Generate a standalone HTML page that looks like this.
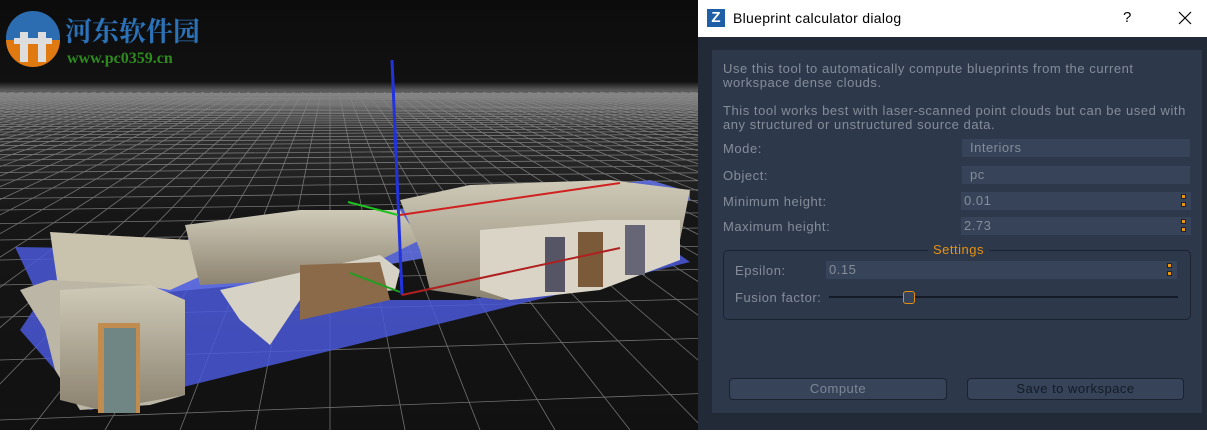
<!DOCTYPE html>
<html><head><meta charset="utf-8"><style>
*{margin:0;padding:0;box-sizing:border-box}
body{width:1207px;height:430px;overflow:hidden;background:#fff;font-family:"Liberation Sans","DejaVu Sans",sans-serif;position:relative}
.v{position:absolute;left:0;top:0;width:698px;height:430px;background:#111}
.dlg{position:absolute;left:698px;top:0;width:509px;height:430px;background:#222a38}
.tb{position:absolute;left:0;top:0;width:509px;height:37px;background:#fff}
.ab{position:absolute;font-size:13px;color:#858d99;white-space:nowrap;letter-spacing:0.55px}
.f{position:absolute;background:#364358;height:18px;font-size:13px;color:#858d99;line-height:18px;padding-left:8px;letter-spacing:0.5px}
.sp{position:absolute;right:5px;width:5px;height:5px;background:#e8950f;border:1px solid #222}
.btn{position:absolute;height:22px;border:1px solid #1b2230;border-radius:4px;background:#364358;font-size:13px;text-align:center;line-height:20px;letter-spacing:0.5px}
</style></head><body>
<div class="v">
<svg width="698" height="430" viewBox="0 0 698 430">
<defs>
<linearGradient id="sky" x1="0" y1="0" x2="0" y2="1">
<stop offset="0" stop-color="#0c0c0c"/><stop offset="0.19" stop-color="#111"/><stop offset="0.21" stop-color="#5a5a5a"/><stop offset="0.3" stop-color="#303030"/><stop offset="0.5" stop-color="#161616"/><stop offset="1" stop-color="#111"/>
</linearGradient>
<linearGradient id="wall" x1="0" y1="0" x2="0" y2="1"><stop offset="0" stop-color="#cfcab8"/><stop offset="1" stop-color="#8c8370"/></linearGradient>
</defs>
<rect width="698" height="430" fill="url(#sky)"/>
<g id="grid" stroke="#9a9a9a" stroke-width="0.8" fill="none" opacity="0.7"></g>
<polygon points="15,247 40,300 20,330 90,410 690,262 680,255 470,300 300,300 190,250" fill="#4a58d8" opacity="0.85"/>
<polygon points="190,233 650,180 690,192 690,200 470,250 300,280 80,300 70,290 180,262" fill="#5f6ee0" opacity="0.9"/>
<polygon points="50,232 190,240 215,258 210,272 170,290 140,285 120,295 60,300" fill="#c9c2ad"/>
<polygon points="185,225 300,210 400,210 420,240 380,260 300,280 200,285" fill="url(#wall)"/>
<polygon points="220,290 380,255 400,270 395,290 300,300 270,345 240,320" fill="#d6d2c6"/>
<polygon points="300,265 380,262 390,300 300,320" fill="#8a6a48"/>
<polygon points="400,200 470,185 610,180 690,190 680,240 640,260 560,290 500,300 430,290 420,250" fill="url(#wall)"/>
<polygon points="480,230 600,220 680,220 680,260 600,290 510,300 480,290" fill="#d9d4c6"/>
<rect x="545" y="237" width="20" height="55" fill="#556"/>
<rect x="578" y="232" width="25" height="55" fill="#7a5a38"/>
<rect x="625" y="225" width="20" height="50" fill="#667"/>
<polygon points="20,290 50,280 150,285 185,300 185,395 150,405 80,410 55,370 45,330" fill="#bcb6a6"/>
<polygon points="60,290 150,285 185,300 185,395 100,410 60,400" fill="url(#wall)"/>
<rect x="98" y="323" width="42" height="90" fill="#c08c4f"/>
<rect x="104" y="328" width="32" height="85" fill="#6f8684"/>
<line x1="392" y1="60" x2="402" y2="295" stroke="#2233dd" stroke-width="3"/>
<line x1="400" y1="215" x2="620" y2="183" stroke="#d02020" stroke-width="2"/>
<line x1="402" y1="295" x2="620" y2="248" stroke="#b02020" stroke-width="2"/>
<line x1="348" y1="202" x2="398" y2="215" stroke="#20c020" stroke-width="2"/>
<line x1="350" y1="273" x2="400" y2="292" stroke="#20a020" stroke-width="2"/>
<circle cx="33" cy="38" r="27" fill="#2b6db0"/>
<path d="M6,40 A27,27 0 0 0 60,40 Z" fill="#e07a10"/>
<rect x="20" y="32" width="8" height="30" fill="#ddd"/><rect x="38" y="32" width="8" height="30" fill="#ddd"/><rect x="14" y="38" width="38" height="6" fill="#ddd"/>
<text x="65" y="41" font-family="Noto Serif CJK SC,serif" font-weight="bold" font-size="27" fill="#2b72b8">河东软件园</text>
<text x="67" y="63" font-family="Liberation Serif,serif" font-weight="bold" font-size="16" fill="#2e8a1e">www.pc0359.cn</text>
</svg>
</div>
<script>
(function(){var g=document.getElementById('grid'),s='';
var H=90;
for(var k=1;k<60;k++){var y=H+1800/(60-k)-30; if(y<H+3)continue; if(y>430)break; s+='<line x1="0" y1="'+y.toFixed(1)+'" x2="698" y2="'+(y-(y-H)*0.08).toFixed(1)+'"/>';}
for(var i=-60;i<=60;i++){s+='<line x1="'+(330+i*9)+'" y1="'+(H+2)+'" x2="'+(330+i*75)+'" y2="430"/>';}
g.innerHTML=s;})();
</script>
<div class="dlg">
<div class="tb">
<div style="position:absolute;left:9px;top:9px;width:18px;height:18px;background:#1e5fa8;color:#fff;font-size:15px;font-weight:bold;text-align:center;line-height:18px">Z</div>
<div style="position:absolute;left:35px;top:10px;font-size:14px;color:#000;letter-spacing:0.3px">Blueprint calculator dialog</div>
<div style="position:absolute;left:425px;top:9px;font-size:15px;color:#000">?</div>
<svg style="position:absolute;left:480px;top:11px" width="14" height="14"><path d="M1,1L13,13M13,1L1,13" stroke="#000" stroke-width="1.2"/></svg>
</div>
<div style="position:absolute;left:14px;top:50px;width:490px;height:363px;background:#2d384b"></div>
<div class="ab" style="left:25px;top:62px;line-height:14px">Use this tool to automatically compute blueprints from the current<br>workspace dense clouds.</div>
<div class="ab" style="left:25px;top:104px;line-height:14px">This tool works best with laser-scanned point clouds but can be used with<br>any structured or unstructured source data.</div>
<div class="ab" style="left:25px;top:141px">Mode:</div>
<div class="f" style="left:264px;top:139px;width:228px">Interiors</div>
<div class="ab" style="left:25px;top:168px">Object:</div>
<div class="f" style="left:264px;top:166px;width:228px">pc</div>
<div class="ab" style="left:25px;top:194px">Minimum height:</div>
<div class="f" style="left:263px;top:192px;width:230px;padding-left:3px">0.01<div class="sp" style="top:2px"></div><div class="sp" style="top:10px"></div></div>
<div class="ab" style="left:25px;top:219px">Maximum height:</div>
<div class="f" style="left:263px;top:217px;width:230px;padding-left:3px">2.73<div class="sp" style="top:2px"></div><div class="sp" style="top:10px"></div></div>
<div style="position:absolute;left:25px;top:250px;width:468px;height:70px;border:1px solid #1c2230;border-radius:5px"></div>
<div style="position:absolute;left:230px;top:242px;padding:0 5px;background:#2d384b;color:#e8920e;font-size:13px;letter-spacing:0.5px">Settings</div>
<div class="ab" style="left:37px;top:263px">Epsilon:</div>
<div class="f" style="left:128px;top:261px;width:351px;padding-left:3px">0.15<div class="sp" style="top:2px"></div><div class="sp" style="top:10px"></div></div>
<div class="ab" style="left:37px;top:290px">Fusion factor:</div>
<div style="position:absolute;left:131px;top:296px;width:349px;height:2px;background:#151b26"></div>
<div style="position:absolute;left:205px;top:291px;width:12px;height:13px;border:1px solid #e08f10;border-radius:3px;background:#364358"></div>
<div class="btn" style="left:31px;top:378px;width:218px;color:#7d8696">Compute</div>
<div class="btn" style="left:269px;top:378px;width:217px;color:#151b26">Save to workspace</div>
</div>
</body></html>
